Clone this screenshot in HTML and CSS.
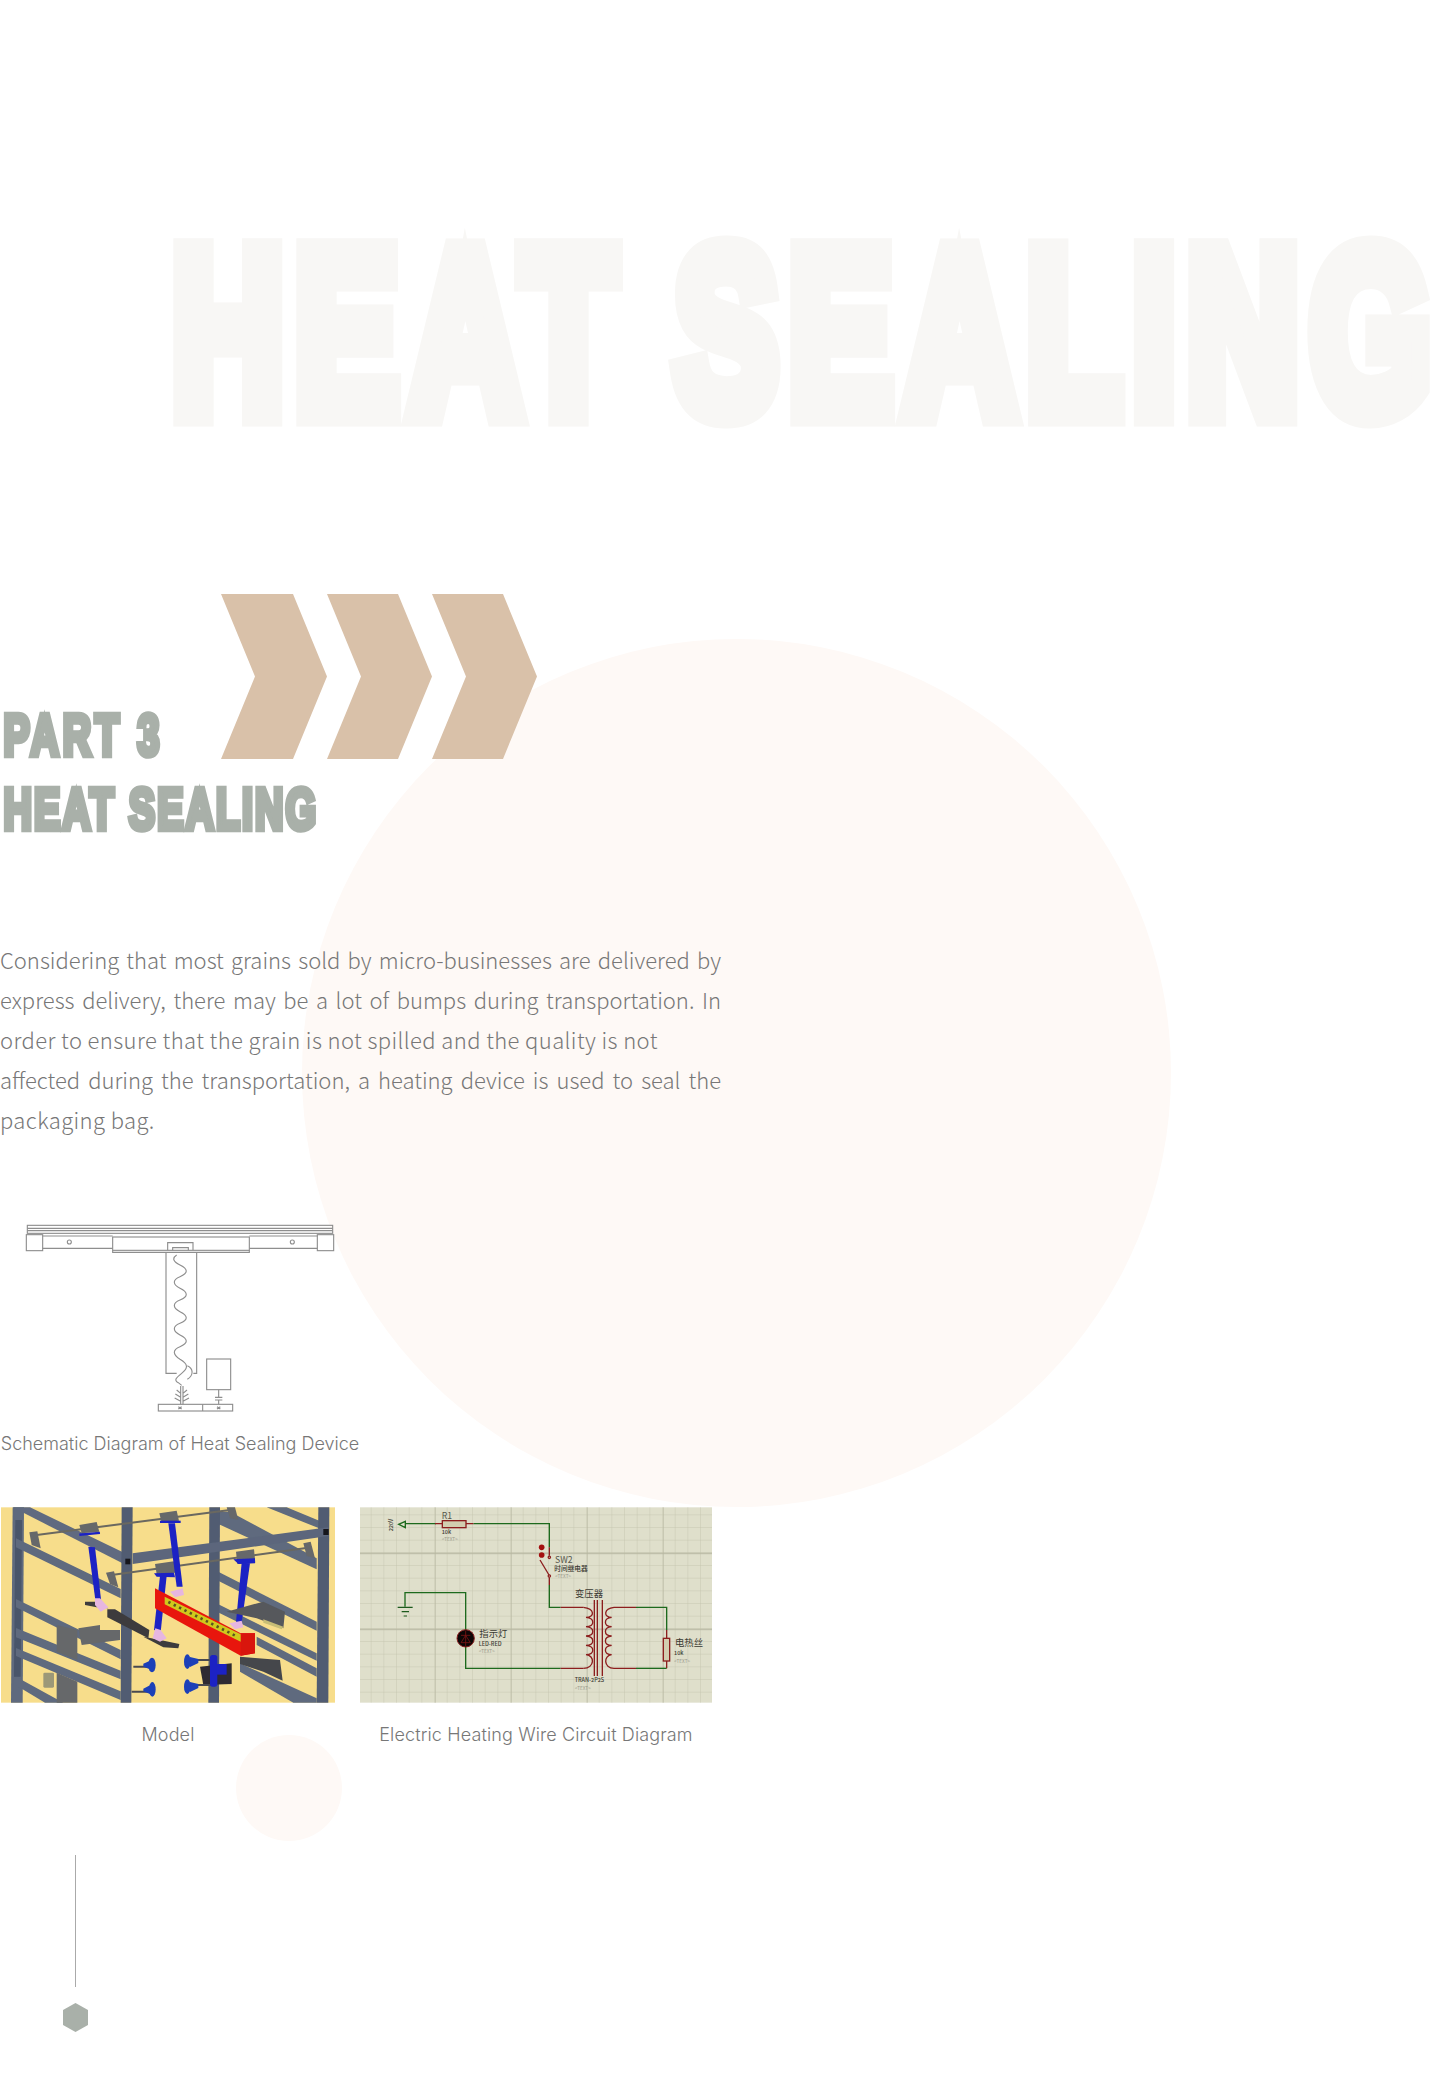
FILE: index.html
```html
<!DOCTYPE html>
<html lang="en">
<head>
<meta charset="utf-8">
<title>Heat Sealing</title>
<link rel="stylesheet" href="styles.css">
</head>
<body>
<main class="page">
  <div class="circle circle-large"></div>
  <div class="circle circle-small"></div>

  <div class="hero-word">HEAT SEALING</div>

  <header class="title">
    <div class="title-top">
      <h2 class="title-line title-part"><span class="impact">PART 3</span></h2>
      <svg class="chevrons" viewBox="0 0 316 165" aria-hidden="true">
        <polygon points="0,0 72,0 106,82.5 72,165 0,165 34,82.5"/>
        <polygon points="106,0 177,0 211,82.5 177,165 106,165 140,82.5"/>
        <polygon points="211,0 282,0 316,82.5 282,165 211,165 245,82.5"/>
      </svg>
    </div>
    <h2 class="title-line title-name"><span class="impact impact-name">HEAT SEALING</span></h2>
  </header>

  <p class="intro">
    <span class="intro-line intro-fill">Considering that most grains sold by micro-businesses are delivered by</span>
    <span class="intro-line intro-fill">express delivery, there may be a lot of bumps during transportation. In</span>
    <span class="intro-line intro-loose">order to ensure that the grain is not spilled and the quality is not</span>
    <span class="intro-line intro-fill">affected during the transportation, a heating device is used to seal the</span>
    <span class="intro-line intro-loose">packaging bag.</span>
  </p>

  <figure class="fig-schematic">
    <svg class="schematic" viewBox="0 0 1110 660" aria-hidden="true">
      <g fill="none" stroke="#8e8e8e" stroke-width="3.4">
        <rect x="82" y="76" width="916" height="24"/>
        <path d="M82 85H998M82 92H998"/>
        <rect x="79" y="104" width="49" height="48"/>
        <rect x="952" y="104" width="49" height="48"/>
        <path d="M128 108H338M128 145H338M748 108H952M748 145H952"/>
        <circle cx="208" cy="126" r="6"/>
        <circle cx="877" cy="126" r="6"/>
        <rect x="338" y="111" width="410" height="40"/>
        <path d="M338 151V157H748V151"/>
        <path d="M503 151V128H579V151M518 151V143H565V151"/>
        <path d="M498 157V520H530M590 157V520H580"/>
        <path d="M530 165C515 175 520 185 540 195C565 207 565 220 540 230C515 240 520 255 540 265C565 277 565 290 540 300C515 310 520 325 540 335C565 347 565 360 540 370C515 380 520 395 540 405C565 417 565 430 540 440C515 450 520 465 540 478C565 492 565 505 545 520C530 532 520 540 535 548L545 556"/>
        <path d="M562 497C580 505 582 525 562 538"/>
        <path d="M542 558V613M549 558V613M530 570L542 580M526 582L542 592M524 594L542 604M561 570L549 580M565 582L549 592M567 594L549 604"/>
        <rect x="475" y="613" width="223" height="20"/>
        <path d="M608 613V633M535 620L545 627M545 620L535 627M651 620L661 627M661 620L651 627"/>
        <rect x="620" y="477" width="72" height="92"/>
        <path d="M656 569V590M645 592H667M645 600H667M656 600V613"/>
      </g>
    </svg>
    <figcaption class="caption caption-schematic">Schematic Diagram of Heat Sealing Device</figcaption>
  </figure>

  <div class="photos">
    <figure class="photo photo-model">
      <svg class="picture" viewBox="3 52 1002 586" aria-hidden="true">
        <defs>
          <filter id="soft" x="-2%" y="-2%" width="104%" height="104%"><feGaussianBlur stdDeviation="1.6"/></filter>
        </defs>
        <rect x="3" y="52" width="1002" height="586" fill="#f7dd8b"/>
        <g filter="url(#soft)">
          <g fill="#5e6a7e">
            <polygon points="800,52 860,52 965,95 965,118"/>
            <polygon points="640,65 690,65 950,205 950,238 640,95"/>
            <polygon points="640,238 950,395 950,422 640,265"/>
            <polygon points="640,335 950,490 950,512 640,360"/>
            <polygon points="770,440 950,535 950,560 770,465"/>
            <polygon points="720,520 950,625 950,638 880,638 720,545"/>
          </g>
          <g fill="#515c72">
            <polygon points="628,52 660,52 657,638 625,638"/>
            <polygon points="955,52 988,52 985,638 950,638"/>
          </g>
          <polygon points="38,52 72,52 68,638 33,638" fill="#5e6a7e"/>
          <polygon points="46,90 66,90 62,560 42,560" fill="#4a546a"/>
          <g fill="#5e6a7e">
            <polygon points="48,145 48,172 362,325 362,297"/>
            <polygon points="48,327 48,352 362,508 362,480"/>
            <polygon points="48,414 48,442 362,568 362,542"/>
            <polygon points="48,474 48,498 362,630 362,604"/>
            <polygon points="48,560 48,586 135,638 190,638"/>
          </g>
          <polygon points="38,52 90,52 372,188 372,222" fill="#606b80"/>
          <polygon points="398,190 985,112 985,138 398,222" fill="#5b667b"/>
          <polygon points="365,52 398,52 394,638 362,638" fill="#515c72"/>
          <rect x="376" y="206" width="15" height="17" fill="#15151c"/>
          <rect x="970" y="117" width="16" height="18" fill="#15151c"/>
          <g stroke="#6a6860" stroke-width="6" fill="none">
            <path d="M110 135L690 60"/>
            <path d="M335 255L935 172"/>
          </g>
          <g fill="#66676b">
            <polygon points="238,105 290,96 298,125 245,130"/>
            <polygon points="478,70 530,62 537,92 485,98"/>
            <polygon points="465,222 522,214 528,248 470,252"/>
            <polygon points="708,185 762,178 766,218 712,222"/>
            <polygon points="88,127 112,124 122,175 95,165"/>
            <polygon points="318,248 342,244 355,292 330,282"/>
            <polygon points="910,160 932,155 945,205 920,198"/>
            <polygon points="680,52 705,52 715,90 690,85"/>
            <polygon points="170,405 232,420 232,510 170,485"/>
            <polygon points="170,548 232,575 232,638 170,638"/>
            <polygon points="235,415 300,405 300,420 360,420 360,450 245,465"/>
          </g>
          <g fill="#1c21c4">
            <polygon points="265,170 285,172 305,345 288,345"/>
            <polygon points="505,100 525,100 548,290 530,290"/>
            <polygon points="480,258 500,258 482,425 462,420"/>
            <polygon points="725,218 750,220 725,398 708,395"/>
            <rect x="480" y="92" width="62" height="7"/>
            <rect x="238" y="128" width="62" height="7" transform="rotate(-5 270 132)"/>
            <polygon points="462,250 522,248 525,262 470,260"/>
            <polygon points="700,208 765,205 765,220 715,222"/>
          </g>
          <g fill="#3c3b3d">
            <polygon points="255,335 285,335 325,355 290,352 255,345"/>
            <polygon points="322,358 345,358 448,420 445,445 322,382"/>
            <polygon points="430,440 470,448 538,462 535,475 490,472"/>
          </g>
          <polygon points="680,365 790,335 855,365 850,415 770,385" fill="#57585c"/>
          <polygon points="720,500 840,510 848,572 790,545 720,522" fill="#45464c"/>
          <polygon points="600,530 695,520 695,582 610,585" fill="#2d2c30"/>
          <polygon points="790,388 850,410 845,418 790,398" fill="#c7bd76"/>
          <polygon points="465,295 722,430 765,430 765,490 722,497 465,355" fill="#e8160f"/>
          <polygon points="722,430 765,430 765,490 722,497" fill="#d9120f"/>
          <polygon points="494,320 722,433 722,455 494,343" fill="#cfc91f"/>
          <path d="M505 336L712 440" stroke="#5a5220" stroke-width="8" stroke-dasharray="7 11" fill="none"/>
          <g fill="#e6b6e0">
            <polygon points="285,325 300,325 325,352 302,365 285,345"/>
            <polygon points="466,415 482,420 500,445 480,455 458,445"/>
            <polygon points="510,305 548,295 552,315 525,322"/>
            <polygon points="688,400 725,392 730,412 705,418"/>
          </g>
          <g stroke="#4a4a50" stroke-width="6">
            <path d="M400 530H445M395 605H445M590 510H645M590 585H645"/>
          </g>
          <g fill="#1b3fb8">
            <polygon points="430,521 450,512 450,538 430,530"/>
            <polygon points="430,596 450,586 450,612 430,604"/>
            <polygon points="595,507 570,501 570,531 595,519"/>
            <polygon points="595,582 570,576 570,606 595,594"/>
            <ellipse cx="456" cy="525" rx="11" ry="22"/>
            <ellipse cx="457" cy="598" rx="10" ry="22"/>
            <ellipse cx="562" cy="515" rx="10" ry="22"/>
            <ellipse cx="562" cy="590" rx="10" ry="22"/>
          </g>
          <rect x="630" y="495" width="22" height="95" rx="8" fill="#1c21c4"/>
          <rect x="650" y="522" width="30" height="32" fill="#1c21c4"/>
          <rect x="130" y="548" width="32" height="45" rx="4" fill="#9c9878"/>
        </g>
      </svg>
      <figcaption class="caption">Model</figcaption>
    </figure>

    <figure class="photo photo-circuit">
      <svg class="picture" viewBox="30 52 1056 586" aria-hidden="true">
        <defs>
          <pattern id="minor" x="27" y="38" width="38" height="38" patternUnits="userSpaceOnUse">
            <path d="M38 0V38M0 38H38" fill="none" stroke="#c2c2ac" stroke-width="2.4"/>
          </pattern>
          <pattern id="major" x="27" y="38" width="228" height="228" patternUnits="userSpaceOnUse">
            <path d="M0 0V228M0 152H228" fill="none" stroke="#b6b6a0" stroke-width="3.4"/>
          </pattern>
        </defs>
        <rect x="30" y="52" width="1056" height="586" fill="#dfdfcb"/>
        <rect x="30" y="52" width="1056" height="586" fill="url(#minor)"/>
        <rect x="30" y="52" width="1056" height="586" fill="url(#major)"/>
        <g fill="none" stroke="#1d6a1d" stroke-width="4">
          <path d="M165 101H258M370 101H598V172"/>
          <path d="M598 285V352H632"/>
          <path d="M165 350V308H347V420"/>
          <path d="M347 470V535H632"/>
          <path d="M858 352H950V420"/>
          <path d="M858 535H950"/>
          <path d="M166 94L146 103L166 113Z"/>
        </g>
        <g fill="none" stroke="#8c1e1e" stroke-width="4">
          <path d="M255 101H277M348 101H370"/>
          <path d="M598 172V197M598 262V285"/>
          <path d="M570 210L597 255"/>
          <path d="M632 352H700M632 535H700"/>
          <path d="M792 352H858M792 535H858"/>
          <path d="M700 352C735 356 735 382 708 382C735 384 735 410 708 410C735 412 735 438 708 438C735 440 735 466 708 466C735 468 735 494 708 494C735 496 735 534 700 535"/>
          <path d="M792 352C760 356 760 382 785 382C760 384 760 410 785 410C760 412 760 438 785 438C760 440 760 466 785 466C760 468 760 494 785 494C760 496 760 534 792 535"/>
          <path d="M733 330V558M742 330V558M757 330V558"/>
          <path d="M950 420V445M950 513V535"/>
          <circle cx="598" cy="202" r="3.5"/>
          <circle cx="598" cy="258" r="3.5"/>
          <rect x="277" y="92" width="71" height="21" fill="#d2ceb0"/>
          <rect x="940" y="445" width="19" height="68" fill="#d2ceb0"/>
        </g>
        <g fill="#a30f0f">
          <circle cx="575" cy="172" r="8.5"/>
          <circle cx="575" cy="195" r="8.5"/>
        </g>
        <path d="M143 352H188M155 365H177M161 378H171" stroke="#1d5a1d" stroke-width="3.5"/>
        <circle cx="347" cy="445" r="26" fill="#0c0606" stroke="#8c1e1e" stroke-width="3"/>
        <path d="M347 422V468M333 436H361M333 458L347 436L361 458Z" fill="none" stroke="#7a1414" stroke-width="2.5"/>
        <g class="schem-text">
          <text class="t-name" x="275" y="86">R1</text>
          <text class="t-small" x="275" y="133">10k</text>
          <text class="t-ghost" x="275" y="154">&lt;TEXT&gt;</text>
          <text class="t-name" x="615" y="218">SW2</text>
          <text class="t-cn-sm" x="613" y="244">时间继电器</text>
          <text class="t-ghost" x="615" y="265">&lt;TEXT&gt;</text>
          <text class="t-cn" x="675" y="321">变压器</text>
          <text class="t-cn" x="388" y="442">指示灯</text>
          <text class="t-small" x="386" y="468">LED-RED</text>
          <text class="t-ghost" x="386" y="490">&lt;TEXT&gt;</text>
          <text class="t-cn" x="975" y="468">电热丝</text>
          <text class="t-small" x="972" y="494">10k</text>
          <text class="t-ghost" x="972" y="518">&lt;TEXT&gt;</text>
          <text class="t-small" x="674" y="576">TRAN-2P2S</text>
          <text class="t-ghost" x="674" y="600">&lt;TEXT&gt;</text>
          <text class="t-small" transform="translate(128 124) rotate(-90)">220V</text>
        </g>
      </svg>
      <figcaption class="caption">Electric Heating Wire Circuit Diagram</figcaption>
    </figure>
  </div>

  <div class="marker">
    <div class="marker-line"></div>
    <svg class="marker-hex" viewBox="0 0 25 29" aria-hidden="true"><polygon points="12.5,0 25,7 25,22 12.5,29 0,22 0,7"/></svg>
  </div>
</main>
</body>
</html>
```

FILE: styles.css
```css
* { box-sizing: border-box; }

html, body { margin: 0; padding: 0; background: #fff; }

.page {
  position: relative;
  width: 1440px;
  height: 2075px;
  overflow: hidden;
  font-family: "Inter", "Liberation Sans", sans-serif;
  color: #777;
}

.circle {
  position: absolute;
  border-radius: 50%;
  background: #fef9f6;
  z-index: 0;
}
.circle-large { left: 302px; top: 639px; width: 869px; height: 868px; }
.circle-small { left: 236px; top: 1735px; width: 106px; height: 106px; }

.hero-word {
  position: relative;
  width: 1900px;
  height: 420px;
  padding-top: 208px;
  padding-left: 172px;
  font-family: "Liberation Sans", sans-serif;
  font-weight: 700;
  font-size: 224px;
  line-height: 240px;
  letter-spacing: 16.6px;
  word-spacing: -10px;
  white-space: nowrap;
  color: #f8f7f5;
  -webkit-text-stroke: 26px #f8f7f5;
  transform: scale(0.69, 1.044);
  transform-origin: 172px 238px;
}

.title { position: relative; padding-top: 174px; }
.title-top { display: flex; align-items: flex-end; }
.title-line {
  margin: 0;
  font-family: "Liberation Sans", sans-serif;
  font-weight: 700;
  font-size: 57px;
  line-height: 48px;
  height: 48px;
  color: #a9b0a9;
  white-space: nowrap;
}
.title-part { width: 221px; flex: none; }
.title-name { margin-top: 26px; }
.impact {
  display: inline-block;
  letter-spacing: 5.5px;
  -webkit-text-stroke: 6.6px #a9b0a9;
  transform: scaleX(0.69);
  transform-origin: 0 0;
  padding-left: 5px;
}
.impact-name { letter-spacing: 3px; }
.chevrons { display: block; width: 316px; height: 165px; flex: none; fill: #d9c1a9; }

.intro {
  position: relative;
  width: 721px;
  margin: 106px 0 0;
  font-family: "Noto Sans CJK SC", "Noto Sans", sans-serif;
  font-weight: 300;
  font-size: 22px;
  line-height: 40px;
  color: #777;
}
.intro-line { display: block; }
.intro-fill { text-align: justify; text-align-last: justify; }
.intro-loose { letter-spacing: 0.4px; }

.fig-schematic { position: relative; margin: 61px 0 0; width: 370px; }
.schematic { display: block; width: 370px; height: 220px; }

.caption {
  font-weight: 300;
  font-size: 18px;
  line-height: 24px;
  letter-spacing: 0.13px;
  margin-top: 20px;
  color: #777;
  text-align: center;
  white-space: nowrap;
}
.caption-schematic { margin-top: 12px; width: 360px; letter-spacing: 0; }

.photos {
  position: relative;
  display: flex;
  gap: 25px;
  margin: 51px 0 0 1px;
}
.photo { margin: 0; }
.photo-model { width: 334px; }
.photo-circuit { width: 352px; }
.picture { display: block; width: 100%; height: 196px; }

.schem-text { font-family: "Noto Sans CJK SC", "Liberation Sans", sans-serif; fill: #3a3a32; }
.t-name { font-size: 26px; fill: #55554a; }
.t-small { font-size: 16.5px; font-weight: 500; }
.t-ghost { font-size: 14px; fill: #9a9a8c; }
.t-cn { font-size: 28px; }
.t-cn-sm { font-size: 20px; font-weight: 500; }

.marker {
  position: relative;
  display: flex;
  flex-direction: column;
  align-items: center;
  gap: 16px;
  width: 25px;
  margin: 108px 0 0 63px;
}
.marker-line { width: 1px; height: 132px; background: #aaa; }
.marker-hex { display: block; width: 25px; height: 29px; fill: #a9b0a9; }
```
